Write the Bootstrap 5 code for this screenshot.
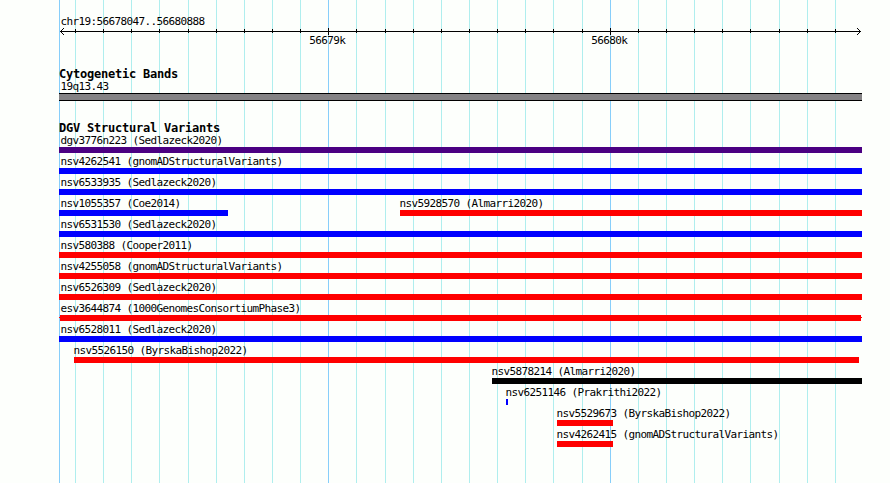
<!DOCTYPE html>
<html lang="en">
<head>
<meta charset="utf-8">
<meta name="viewport" content="width=device-width, initial-scale=1">
<title>chr19:56678047..56680888</title>
<link href="https://cdn.jsdelivr.net/npm/bootstrap@5.3.0/dist/css/bootstrap.min.css" rel="stylesheet">
<style>
body{background:#fdfffc;color:#000;font-family:"DejaVu Sans Mono",monospace;font-size:11px;letter-spacing:-.622px;line-height:15px}
.browser{width:890px;height:483px;white-space:nowrap}
.gridlines{z-index:0}
.tracks{z-index:1;padding-left:59px;width:862px}
.region{height:28px;padding:14px 0 0 1.4px}
.axis{height:7px}
.axis svg{display:block}
.scale-labels{height:30px;padding-left:250.3px}
.scale-labels span{flex:0 0 282px;margin-top:-2px}
.track-title{font-size:12px;font-weight:700;letter-spacing:-.224px;height:13px;line-height:19px}
.band-label{height:15px;line-height:17px;padding-left:1.4px}
.band{height:8px;background:#848284;border-top:1px solid #000;border-bottom:1px solid #000;margin-bottom:18px}
.lane{display:grid;grid-template-columns:repeat(803,1px);height:21px}
.feature{min-width:0}
.feature .name{height:15px;line-height:17px;margin-left:-.6px}
.feature.edge .name{margin-left:1.4px}
.bar{height:6px}
.purple{background:#4b0082}.blue{background:#00f}.red{background:#f00}.black{background:#000}
.partial{background:linear-gradient(#f00,#f00) 0 2px/100% 1px no-repeat,linear-gradient(#f00,#f00) 1px 0/801px 6px no-repeat}
</style>
</head>
<body>
<main class="browser position-relative overflow-hidden">
  <svg class="gridlines position-absolute top-0 start-0" width="890" height="483" shape-rendering="crispEdges" aria-hidden="true">
    <path id="minor" fill="#afeeee"/>
    <path fill="#87cefa" d="M59 0h1v483h-1zM328 0h1v483h-1zM610 0h1v483h-1z"/>
  </svg>
  <div class="tracks position-relative">
    <div class="region">chr19:56678047..56680888</div>
    <div class="axis">
      <svg width="803" height="7" shape-rendering="crispEdges" aria-hidden="true">
        <path d="M1 3h801v1H1zM2 2h1v3H2zM3 1h1v1H3zM3 5h1v1H3zM4 0h1v1H4zM4 6h1v1H4zM800 2h1v3h-1zM799 1h1v1h-1zM799 5h1v1h-1zM798 0h1v1h-1zM798 6h1v1h-1zM269 0h1v7h-1zM551 0h1v7h-1z"/>
        <path id="ticks"/>
      </svg>
    </div>
    <div class="scale-labels d-flex"><span>56679k</span><span>56680k</span></div>
    <div class="track-title">Cytogenetic Bands</div>
    <div class="band-label">19q13.43</div>
    <div class="band"></div>
    <div class="track-title">DGV Structural Variants</div>
    <div id="variants"></div>
  </div>
</main>
<script src="https://cdn.jsdelivr.net/npm/bootstrap@5.3.0/dist/js/bootstrap.bundle.min.js"></script>
<script>
const minor=[75,103,131,159,188,216,244,272,300,356,385,413,441,469,497,525,553,582,638,666,694,722,750,779,807,835];
document.getElementById('minor').setAttribute('d',minor.map(x=>`M${x} 0h1v483h-1z`).join(''));
document.getElementById('ticks').setAttribute('d',minor.map(x=>`M${x-59} 1h1v4h-1z`).join(''));
// Each lane lists its features as [name, first column, end column, colour class].
const lanes=[
 [['dgv3776n223 (Sedlazeck2020)',0,803,'purple']],
 [['nsv4262541 (gnomADStructuralVariants)',0,803,'blue']],
 [['nsv6533935 (Sedlazeck2020)',0,803,'blue']],
 [['nsv1055357 (Coe2014)',0,169,'blue'],['nsv5928570 (Almarri2020)',341,803,'red']],
 [['nsv6531530 (Sedlazeck2020)',0,803,'blue']],
 [['nsv580388 (Cooper2011)',0,803,'red']],
 [['nsv4255058 (gnomADStructuralVariants)',0,803,'red']],
 [['nsv6526309 (Sedlazeck2020)',0,803,'red']],
 [['esv3644874 (1000GenomesConsortiumPhase3)',0,803,'partial']],
 [['nsv6528011 (Sedlazeck2020)',0,803,'blue']],
 [['nsv5526150 (ByrskaBishop2022)',15,800,'red']],
 [['nsv5878214 (Almarri2020)',433,803,'black']],
 [['nsv6251146 (Prakrithi2022)',447,449,'blue']],
 [['nsv5529673 (ByrskaBishop2022)',498,554,'red']],
 [['nsv4262415 (gnomADStructuralVariants)',498,554,'red']]
];
document.getElementById('variants').innerHTML=lanes.map(l=>'<div class="lane">'+l.map(([n,a,b,c])=>
 `<div class="feature${a?'':' edge'}" style="grid-column:${a+1}/${b+1}"><div class="name">${n}</div><div class="bar ${c}"></div></div>`).join('')+'</div>').join('');
</script>
</body>
</html>
